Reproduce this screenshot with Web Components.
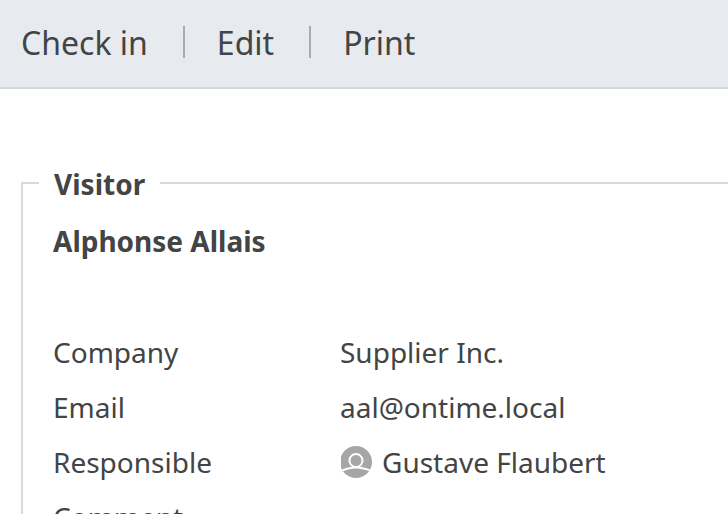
<!DOCTYPE html>
<html lang="en"><head><meta charset="utf-8"><title>Visitor</title>
<style>
body{margin:0;font-family:"Noto Sans",sans-serif;color:#424445;background:#fff;height:100vh;overflow:hidden}
</style></head><body>
<visit-toolbar>
<tool-action>Check in</tool-action><tool-action>Edit</tool-action><tool-action>Print</tool-action>
</visit-toolbar>
<visitor-card legend="Visitor" name="Alphonse Allais">
<detail-row label="Company">Supplier Inc.</detail-row>
<detail-row label="Email">aal@ontime.local</detail-row>
<detail-row label="Responsible"><person-icon></person-icon>Gustave Flaubert</detail-row>
<detail-row label="Comment"></detail-row>
</visitor-card>
<script>
function define(tag, html){
  customElements.define(tag, class extends HTMLElement{
    constructor(){
      super();
      this.attachShadow({mode:"open"}).innerHTML=html;
      this.shadowRoot.querySelectorAll("[data-text]").forEach(el=>{
        el.textContent=this.getAttribute(el.dataset.text);
      });
    }
  });
}
define("visit-toolbar",`<style>
:host{display:block;background:#e7eaef;border-bottom:2px solid #d5d8dc}
nav{display:flex;align-items:center;padding:19px 21px 22px}
</style><nav aria-label="Visit actions"><slot></slot></nav>`);
define("tool-action",`<style>
:host{display:flex;align-items:center}
:host(:not(:first-child))::before{content:"";width:2px;height:32px;background:#a9abae;margin:0 32px 0 35px}
button{font:inherit;font-size:32px;line-height:44px;color:inherit;border:0;background:none;padding:2px 0 0;cursor:pointer}
</style><button type="button"><slot></slot></button>`);
define("visitor-card",`<style>
:host{display:block;padding:73px 0 0 21px}
fieldset{margin:0;min-width:0;border:2px solid #d7dadb;border-right:0;padding:17px 30px 24px;font-size:28px;line-height:40px}
legend{font-weight:700;padding:2px 15px 0;margin-left:-14px}
h1{font-size:28px;line-height:40px;margin:0 0 71px}
dl{margin:0;display:grid;gap:15px}
</style><fieldset><legend data-text="legend"></legend><h1 data-text="name"></h1><dl><slot></slot></dl></fieldset>`);
define("detail-row",`<style>
:host{display:grid;grid-template-columns:287px 1fr}
dd{margin:0;display:flex;align-items:center;gap:10px}
</style><dt data-text="label"></dt><dd><slot></slot></dd>`);
define("person-icon",`<style>
:host{display:block;width:32px;height:32px}svg{display:block}
</style><svg width="32" height="32" viewBox="-1 0 32 32" fill="none" aria-hidden="true"><defs><clipPath id="disc"><circle cx="15" cy="16" r="16"/></clipPath></defs><g clip-path="url(#disc)"><path d="M0 0h31v32H0z" fill="#a6a6a6"/><path d="M-1 25.5C4 23 9 21.5 15 21.5s11 1.500 17 4" stroke="#fff" stroke-width="2"/><circle cx="15" cy="14.500" r="6.500" fill="#a6a6a6" stroke="#fff" stroke-width="2"/></g></svg>`);
</script></body></html>
